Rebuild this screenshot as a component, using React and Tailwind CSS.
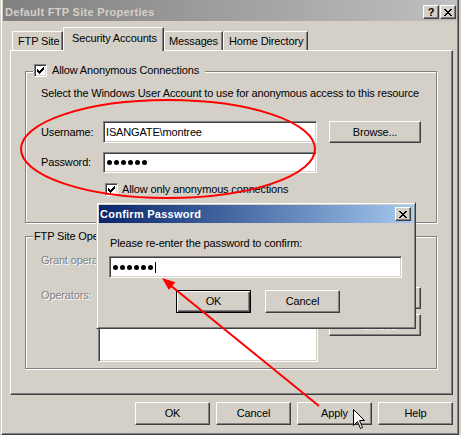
import React from "react";

const raised =
  "border border-t-white border-l-white border-r-[#404040] border-b-[#404040] shadow-[inset_-1px_-1px_0_#808080] bg-[#d4d0c8]";
const sunken =
  "border border-t-[#808080] border-l-[#808080] border-r-white border-b-white shadow-[inset_1px_1px_0_#404040,inset_-1px_-1px_0_#d4d0c8]";
const etched =
  "border border-[#808080] shadow-[1px_1px_0_#fff,inset_1px_1px_0_#fff]";
const disabled = "text-[#808080] [text-shadow:1px_1px_0_#fff]";

function CheckBox() {
  return (
    <div className={`w-[13px] h-[13px] bg-white ${sunken} flex items-center justify-center shrink-0`}>
      <svg width="7" height="7" viewBox="0 0 7 7" shapeRendering="crispEdges">
        <rect x="6" y="0" width="1" height="1" fill="#000" />
        <rect x="5" y="1" width="2" height="1" fill="#000" />
        <rect x="0" y="2" width="1" height="1" fill="#000" />
        <rect x="4" y="2" width="3" height="1" fill="#000" />
        <rect x="0" y="3" width="2" height="1" fill="#000" />
        <rect x="3" y="3" width="3" height="1" fill="#000" />
        <rect x="0" y="4" width="5" height="1" fill="#000" />
        <rect x="1" y="5" width="3" height="1" fill="#000" />
        <rect x="2" y="6" width="1" height="1" fill="#000" />
      </svg>
    </div>
  );
}

function CloseGlyph() {
  return (
    <svg width="8" height="7" viewBox="0 0 8 7" shapeRendering="crispEdges">
      <rect x="0" y="0" width="2" height="1" fill="#000" />
      <rect x="6" y="0" width="2" height="1" fill="#000" />
      <rect x="1" y="1" width="2" height="1" fill="#000" />
      <rect x="5" y="1" width="2" height="1" fill="#000" />
      <rect x="2" y="2" width="4" height="1" fill="#000" />
      <rect x="3" y="3" width="2" height="1" fill="#000" />
      <rect x="2" y="4" width="4" height="1" fill="#000" />
      <rect x="1" y="5" width="2" height="1" fill="#000" />
      <rect x="5" y="5" width="2" height="1" fill="#000" />
      <rect x="0" y="6" width="2" height="1" fill="#000" />
      <rect x="6" y="6" width="2" height="1" fill="#000" />
    </svg>
  );
}

function Dots() {
  return (
    <span className="flex items-center gap-[2px]">
      {[0, 1, 2, 3, 4, 5].map((i) => (
        <span key={i} className="w-[5px] h-[5px] rounded-full bg-black" />
      ))}
    </span>
  );
}

function Btn({ children, className = "" }) {
  return (
    <div className={`${raised} w-[75px] h-[23px] flex items-center justify-center ${className}`}>
      {children}
    </div>
  );
}

export default function App() {
  return (
    <div className="relative w-[461px] h-[435px] overflow-hidden bg-[#d4d0c8] font-['Liberation_Sans',Arial,sans-serif] text-[11px] leading-[13px] tracking-[-0.15px] text-black">
      {/* Main window */}
      <div className="ml-px w-[458px] h-[435px] flex flex-col border-l border-white border-r border-r-[#404040] border-b border-b-[#404040] shadow-[inset_-1px_-1px_0_#808080] pl-px pr-px">
        {/* Title bar */}
        <div className="h-[21px] pt-[3px] flex items-center bg-linear-to-r from-[#808080] to-[#c0c0c0] pl-[2px] pr-px">
          <span className="font-bold tracking-[0.3px] text-[#d4d0c8]">Default FTP Site Properties</span>
          <div className="ml-auto flex items-center gap-[1px]">
            <div className={`${raised} w-[16px] h-[14px] flex items-center justify-center font-bold text-[11px] leading-none`}>?</div>
            <div className={`${raised} w-[16px] h-[14px] flex items-center justify-center`}>
              <CloseGlyph />
            </div>
          </div>
        </div>

        {/* Body */}
        <div className="ml-[7px] mt-[6px] flex flex-col">
          {/* Tabs */}
          <div className="flex items-end h-[23px] pl-[2px]">
            <div className="w-[51px] h-[19px] border-l border-t border-white border-r border-r-[#404040] shadow-[inset_-1px_0_0_#808080] rounded-tl-[2px] flex items-center pl-[5px] pt-[1px]">
              FTP Site
            </div>
            <div className="relative z-10 w-[101px] h-[24px] -mb-px bg-[#d4d0c8] border-l border-t border-white border-r border-r-[#404040] shadow-[inset_-1px_0_0_#808080] rounded-tl-[2px] flex items-center pl-[8px] pb-[2px]">
              Security Accounts
            </div>
            <div className="w-[59px] h-[19px] border-l border-t border-white border-r border-r-[#404040] shadow-[inset_-1px_0_0_#808080] rounded-tl-[2px] flex items-center pl-[4px] pt-[1px]">
              Messages
            </div>
            <div className="w-[85px] h-[19px] border-l border-t border-white border-r border-r-[#404040] shadow-[inset_-1px_0_0_#808080] rounded-tl-[2px] flex items-center pl-[5px] pt-[1px]">
              Home Directory
            </div>
          </div>

          {/* Panel */}
          <div className="w-[443px] h-[345px] border border-t-white border-l-white border-r-[#404040] border-b-[#404040] shadow-[inset_-1px_-1px_0_#808080] pl-[14px] pt-[20px]">
            {/* Group 1 */}
            <div className={`relative w-[412px] h-[152px] ${etched} pl-[15px] pt-[15px]`}>
              <div className="absolute left-[7px] top-[-8px] bg-[#d4d0c8] pl-px pr-[6px] flex items-center gap-[5px]">
                <CheckBox />
                <span>Allow Anonymous Connections</span>
              </div>
              <div>Select the Windows User Account to use for anonymous access to this resource</div>
              <div className="mt-[21px] flex items-center h-[22px]">
                <span className="w-[62px]">Username:</span>
                <div className={`w-[214px] h-[22px] bg-white ${sunken} flex items-center pl-[2px]`}>ISANGATE\montree</div>
                <div className={`${raised} ml-[12px] w-[92px] h-[22px] flex items-center justify-center`}>Browse...</div>
              </div>
              <div className="mt-[9px] flex items-center h-[21px]">
                <span className="w-[62px]">Password:</span>
                <div className={`w-[214px] h-[21px] bg-white ${sunken} flex items-center pl-[3px]`}>
                  <Dots />
                </div>
              </div>
              <div className="mt-[10px] pl-[64px] flex items-center gap-[4px]">
                <CheckBox />
                <span>Allow only anonymous connections</span>
              </div>
            </div>

            {/* Group 2 */}
            <div className={`relative mt-[13px] w-[412px] h-[133px] ${etched} pl-[15px] pt-[17px]`}>
              <div className="absolute left-[7px] top-[-7px] bg-[#d4d0c8] px-px">FTP Site Operators</div>
              <div className={disabled}>Grant operator privileges to Windows User Accounts</div>
              <div className="mt-[18px] flex items-start">
                <span className={`w-[57px] pt-[4px] ${disabled}`}>Operators:</span>
                <div className={`w-[220px] h-[77px] bg-white ${sunken}`} />
                <div className="ml-[11px] pt-[2px] flex flex-col gap-[5px]">
                  <div className={`${raised} w-[92px] h-[22px] flex items-center justify-center ${disabled}`}>Add...</div>
                  <div className={`${raised} w-[92px] h-[22px] flex items-center justify-center ${disabled}`}>Remove</div>
                </div>
              </div>
            </div>
          </div>

          {/* Bottom buttons */}
          <div className="mt-[7px] pl-[125px] flex gap-[6px]">
            <Btn>OK</Btn>
            <Btn>Cancel</Btn>
            <Btn>Apply</Btn>
            <Btn>Help</Btn>
          </div>
        </div>
      </div>

      {/* Confirm Password dialog */}
      <div className="absolute left-[96px] top-[202px] w-[320px] h-[127px] bg-[#d4d0c8] border border-t-[#d4d0c8] border-l-[#d4d0c8] border-r-[#404040] border-b-[#404040] shadow-[inset_1px_1px_0_#fff,inset_-1px_-1px_0_#808080] p-[2px] flex flex-col">
        <div className="h-[18px] flex items-center bg-linear-to-r from-[#0a246a] to-[#a6caf0] pl-px pr-[2px]">
          <span className="font-bold tracking-[0.25px] text-white">Confirm Password</span>
          <div className={`${raised} ml-auto w-[16px] h-[14px] flex items-center justify-center`}>
            <CloseGlyph />
          </div>
        </div>
        <div className="pl-[11px] pt-[14px] flex flex-col">
          <div>Please re-enter the password to confirm:</div>
          <div className={`mt-[6px] -ml-px w-[293px] h-[22px] bg-white ${sunken} flex items-center pl-[3px]`}>
            <Dots />
            <span className="ml-[2px] w-px h-[11px] bg-black" />
          </div>
          <div className="mt-[12px] pl-[66px] flex gap-[14px]">
            <div className="w-[75px] h-[23px] border border-black shadow-[inset_1px_1px_0_#fff,inset_-1px_-1px_0_#404040,inset_-2px_-2px_0_#808080] flex items-center justify-center">
              OK
            </div>
            <Btn>Cancel</Btn>
          </div>
        </div>
      </div>

      {/* Annotations */}
      <svg className="absolute inset-0 pointer-events-none" width="461" height="435" viewBox="0 0 461 435">
        <ellipse cx="168" cy="149" rx="147" ry="49" fill="none" stroke="#ff0000" strokeWidth="2" />
        <line x1="319" y1="406" x2="170" y2="285" stroke="#ff0000" strokeWidth="2" />
        <polygon points="162,278 175.3,282.3 168.9,290.1" fill="#ff0000" />
        <path
          d="M353.5 409.5 V425.5 L357.5 421.5 L360.5 428.5 L362.5 427.5 L359.5 420.5 H364.5 Z"
          fill="#fff"
          stroke="#000"
          strokeWidth="1"
        />
      </svg>
    </div>
  );
}
